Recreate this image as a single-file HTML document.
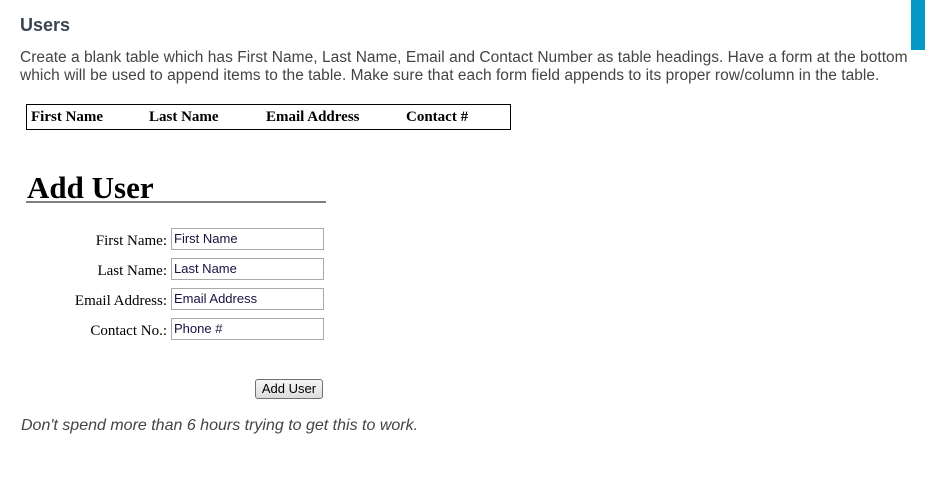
<!DOCTYPE html>
<html><head><style>
body{margin:0;width:925px;height:479px;background:#fff;position:relative;overflow:hidden;font-family:"Liberation Sans",sans-serif}
.a{position:absolute;white-space:nowrap}
.lbl{position:absolute;right:758px;font-family:"Liberation Serif",serif;font-size:15px;color:#000}
.in{position:absolute;left:171px;height:20px;border:1px solid #a9a9a9;box-sizing:content-box;font-size:13px;color:#1a1040;line-height:20px;padding-left:2px;width:149px}
</style></head><body>
<div class="a" style="left:911px;top:0;width:14px;height:50px;background:#0399c4"></div>
<div class="a" style="left:20px;top:15px;font-size:18px;font-weight:bold;color:#3b4552">Users</div>
<div class="a" style="left:20px;top:49px;font-size:15.5px;line-height:18px;color:#444;letter-spacing:0.03px">Create a blank table which has First Name, Last Name, Email and Contact Number as table headings. Have a form at the bottom<br>which will be used to append items to the table. Make sure that each form field appends to its proper row/column in the table.</div>
<div class="a" style="left:26px;top:104px;width:483px;height:24px;border:1px solid #000;font-family:'Liberation Serif',serif;font-weight:bold;font-size:15px">
<span class="a" style="left:4px;top:4px">First Name</span>
<span class="a" style="left:122px;top:4px">Last Name</span>
<span class="a" style="left:239px;top:4px">Email Address</span>
<span class="a" style="left:379px;top:4px">Contact #</span>
</div>
<div class="a" style="left:27px;top:170px;font-family:'Liberation Serif',serif;font-weight:bold;font-size:31px;color:#000">Add User</div>
<div class="a" style="left:26px;top:201px;width:300px;height:2px;background:#808080"></div>
<div class="lbl" style="top:233px">First Name:</div>
<div class="lbl" style="top:263px">Last Name:</div>
<div class="lbl" style="top:293px">Email Address:</div>
<div class="lbl" style="top:323px">Contact No.:</div>
<div class="in" style="top:228px">First Name</div>
<div class="in" style="top:258px">Last Name</div>
<div class="in" style="top:288px">Email Address</div>
<div class="in" style="top:318px">Phone #</div>
<div class="a" style="left:255px;top:379px;width:66px;height:18px;border:1px solid #707070;border-radius:3px;background:linear-gradient(#f6f6f6,#dcdcdc);font-size:13px;text-align:center;line-height:18px">Add User</div>
<div class="a" style="left:21px;top:417px;font-size:16px;font-style:italic;color:#444">Don't spend more than 6 hours trying to get this to work.</div>
</body></html>
